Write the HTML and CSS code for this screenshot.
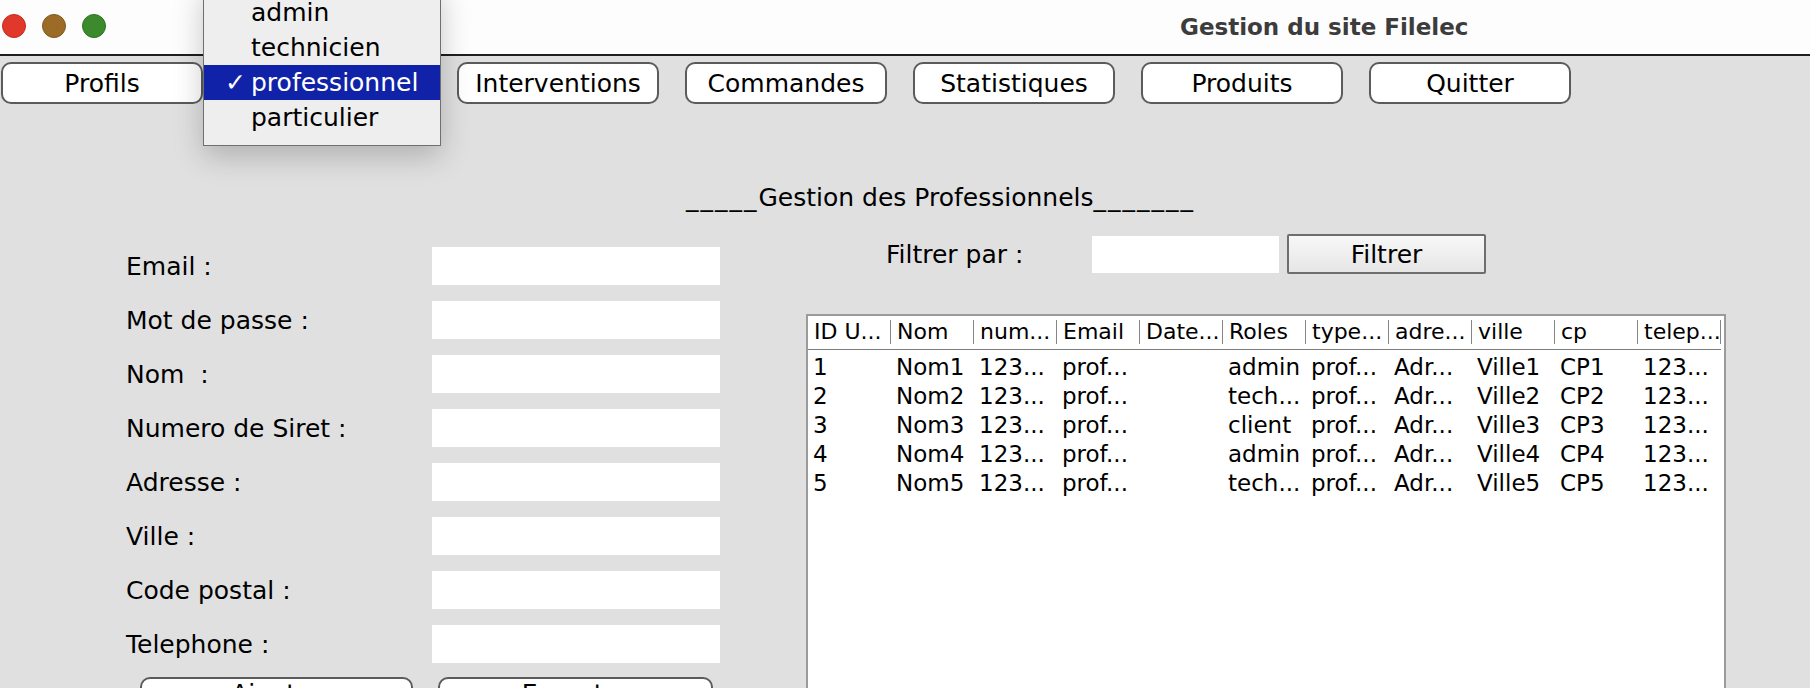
FILE: index.html
```html
<!DOCTYPE html>
<html lang="fr">
<head>
<meta charset="utf-8">
<title>Gestion du site Filelec</title>
<link rel="stylesheet" href="styles.css">
</head>
<body>
<div class="window">
  <header class="titlebar">
    <div class="lights">
      <span class="light red"></span>
      <span class="light amber"></span>
      <span class="light green"></span>
    </div>
    <h1 class="title">Gestion du site Filelec</h1>
  </header>

  <nav class="toolbar">
    <button class="btn">Profils</button>
    <div class="combo">
      <button class="btn" aria-label="Type de profil"></button>
      <ul class="menu">
        <li class="menu-item"><span class="check"></span>admin</li>
        <li class="menu-item"><span class="check"></span>technicien</li>
        <li class="menu-item selected"><span class="check">✓</span>professionnel</li>
        <li class="menu-item"><span class="check"></span>particulier</li>
      </ul>
    </div>
    <button class="btn">Interventions</button>
    <button class="btn">Commandes</button>
    <button class="btn">Statistiques</button>
    <button class="btn">Produits</button>
    <button class="btn">Quitter</button>
  </nav>

  <main class="main">
    <h2 class="heading"><span class="rule">_____</span>Gestion des Professionnels<span class="rule">_______</span></h2>
    <div class="content">
      <section class="form">
        <div class="fields">
          <label class="label">Email :</label><input class="input" type="text">
          <label class="label">Mot de passe :</label><input class="input" type="text">
          <label class="label">Nom&nbsp; :</label><input class="input" type="text">
          <label class="label">Numero de Siret :</label><input class="input" type="text">
          <label class="label">Adresse :</label><input class="input" type="text">
          <label class="label">Ville :</label><input class="input" type="text">
          <label class="label">Code postal :</label><input class="input" type="text">
          <label class="label">Telephone :</label><input class="input" type="text">
        </div>
        <div class="form-actions">
          <button class="btn btn-add">Ajouter</button>
          <button class="btn btn-export">Exporter</button>
        </div>
      </section>

      <section class="right">
        <div class="filter">
          <span class="filter-label">Filtrer par :</span>
          <input class="filter-input" type="text">
          <button class="filter-btn">Filtrer</button>
        </div>
        <div class="table">
          <div class="thead">
            <div class="th">ID U...</div>
            <div class="th">Nom</div>
            <div class="th">num...</div>
            <div class="th">Email</div>
            <div class="th">Date...</div>
            <div class="th">Roles</div>
            <div class="th">type...</div>
            <div class="th">adre...</div>
            <div class="th">ville</div>
            <div class="th">cp</div>
            <div class="th">telep...</div>
          </div>
          <div class="tbody">
            <div class="tr"><div class="td">1</div><div class="td">Nom1</div><div class="td">123...</div><div class="td">prof...</div><div class="td"></div><div class="td">admin</div><div class="td">prof...</div><div class="td">Adr...</div><div class="td">Ville1</div><div class="td">CP1</div><div class="td">123...</div></div>
            <div class="tr"><div class="td">2</div><div class="td">Nom2</div><div class="td">123...</div><div class="td">prof...</div><div class="td"></div><div class="td">tech...</div><div class="td">prof...</div><div class="td">Adr...</div><div class="td">Ville2</div><div class="td">CP2</div><div class="td">123...</div></div>
            <div class="tr"><div class="td">3</div><div class="td">Nom3</div><div class="td">123...</div><div class="td">prof...</div><div class="td"></div><div class="td">client</div><div class="td">prof...</div><div class="td">Adr...</div><div class="td">Ville3</div><div class="td">CP3</div><div class="td">123...</div></div>
            <div class="tr"><div class="td">4</div><div class="td">Nom4</div><div class="td">123...</div><div class="td">prof...</div><div class="td"></div><div class="td">admin</div><div class="td">prof...</div><div class="td">Adr...</div><div class="td">Ville4</div><div class="td">CP4</div><div class="td">123...</div></div>
            <div class="tr"><div class="td">5</div><div class="td">Nom5</div><div class="td">123...</div><div class="td">prof...</div><div class="td"></div><div class="td">tech...</div><div class="td">prof...</div><div class="td">Adr...</div><div class="td">Ville5</div><div class="td">CP5</div><div class="td">123...</div></div>
          </div>
        </div>
      </section>
    </div>
  </main>
</div>
</body>
</html>
```

FILE: styles.css
```css
* { box-sizing: border-box; }

html, body {
  margin: 0;
  padding: 0;
}

body {
  width: 1810px;
  height: 688px;
  overflow: hidden;
  background: #e0e0e0;
  font-family: "DejaVu Sans", "Noto Sans", sans-serif;
  font-size: 25px;
  color: #000;
}

.window {
  width: 1810px;
  height: 688px;
  overflow: hidden;
}

/* Title bar */
.titlebar {
  height: 56px;
  background: #fdfdfd;
  border-bottom: 2px solid #1e1e1e;
  display: flex;
  align-items: center;
}

.lights {
  display: flex;
  gap: 16px;
  padding-left: 2px;
  margin-top: -2px;
}

.light {
  width: 24px;
  height: 24px;
  border-radius: 50%;
  border: 1px solid;
}
.light.red { background: #e0392c; border-color: #c42c20; }
.light.amber { background: #9c6b27; border-color: #83581d; }
.light.green { background: #3b8a2b; border-color: #2e7421; }

.title {
  margin: 0 0 0 1074px;
  font-family: "DejaVu Sans", sans-serif;
  font-weight: 700;
  font-size: 23px;
  color: #3c3c3c;
  white-space: nowrap;
}

/* Toolbar */
.toolbar {
  display: flex;
  gap: 26px;
  padding: 6px 0 0 1px;
  position: relative;
  z-index: 5;
}

.btn {
  width: 202px;
  height: 42px;
  padding: 0;
  background: #fff;
  border: 2px solid #5b5b5b;
  border-radius: 10px;
  font-family: "DejaVu Sans", sans-serif;
  font-size: 25px;
  color: #000;
  line-height: 1;
}

.combo {
  position: relative;
  width: 202px;
  height: 42px;
}

.menu {
  position: absolute;
  left: -26px;
  top: -78px;
  width: 238px;
  margin: 0;
  padding: 10px 0;
  list-style: none;
  background: #eeeeee;
  border: 1px solid #6f6f6f;
  box-shadow: 0 10px 28px rgba(0, 0, 0, 0.22);
}

.menu-item {
  display: flex;
  align-items: center;
  height: 35px;
  font-size: 25px;
  color: #000;
  white-space: nowrap;
}

.menu-item.selected {
  background: #1023a8;
  color: #fff;
}

.check {
  width: 47px;
  padding-left: 21px;
  font-size: 25px;
  font-weight: 700;
}

/* Main */
.main {
  display: flex;
  flex-direction: column;
}

.heading {
  margin: 79px 0 0 686px;
  font-size: 25px;
  font-weight: normal;
  line-height: 30px;
  white-space: nowrap;
}

.rule {
  letter-spacing: 2px;
}

.content {
  display: flex;
  align-items: flex-start;
}

.form {
  margin: 34px 0 0 126px;
}

.fields {
  display: grid;
  grid-template-columns: 306px 288px;
  grid-auto-rows: 38px;
  row-gap: 16px;
  align-items: center;
}

.label {
  font-size: 25px;
  white-space: nowrap;
}

.input {
  width: 288px;
  height: 38px;
  border: 0;
  background: #fff;
  outline: none;
}

.form-actions {
  display: flex;
  gap: 25px;
  margin: 14px 0 0 14px;
}

.form-actions .btn {
  height: 32px;
}

.btn-add { width: 273px; }
.btn-export { width: 275px; }

.right {
  margin: 21px 0 0 86px;
}

.filter {
  display: flex;
  align-items: center;
  height: 40px;
}

.filter-label {
  width: 206px;
  margin-left: 80px;
  font-size: 25px;
  white-space: nowrap;
}

.filter-input {
  width: 187px;
  height: 37px;
  border: 0;
  background: #fff;
  margin-right: 8px;
}

.filter-btn {
  width: 199px;
  height: 40px;
  padding: 0;
  border: 2px solid #6e6e6e;
  border-radius: 2px;
  background: linear-gradient(#f8f8f8, #e6e6e6);
  font-family: "DejaVu Sans", sans-serif;
  font-size: 25px;
  color: #000;
}

/* Table */
.table {
  margin-top: 40px;
  width: 920px;
  height: 420px;
  border: 2px solid #9b9b9b;
  background: #fff;
  font-size: 22px;
}

.thead {
  display: grid;
  grid-template-columns: repeat(11, 83px);
  padding: 4px 0 5px;
  border-bottom: 1px solid #7c7c7c;
  width: 913px;
}

.th {
  height: 24px;
  line-height: 24px;
  padding-left: 6px;
  border-right: 1px solid #858585;
  white-space: nowrap;
  overflow: hidden;
}

.tbody {
  padding-top: 2px;
}

.tr {
  display: grid;
  grid-template-columns: repeat(11, 83px);
  height: 29px;
  align-items: center;
  font-size: 23px;
}

.td {
  padding-left: 5px;
  white-space: nowrap;
  overflow: hidden;
}
```
